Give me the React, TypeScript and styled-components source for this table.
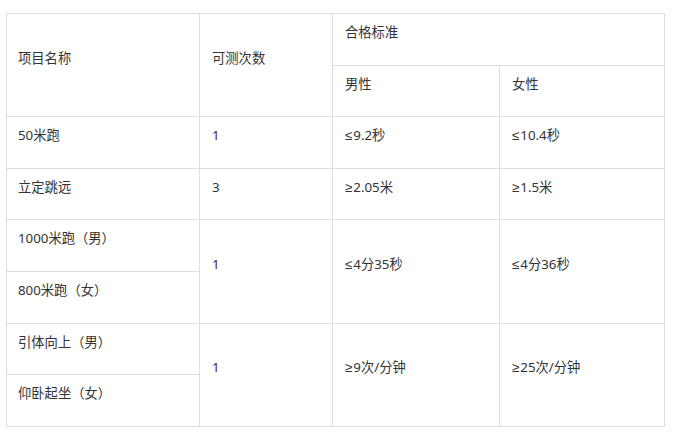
import React from 'react'
import styled, { createGlobalStyle } from 'styled-components'

const GlobalStyle = createGlobalStyle`
  html, body {
    margin: 0;
    background: #fff;
  }
  body {
    font-family: "Noto Sans", "Noto Sans CJK SC", sans-serif;
  }
`

const Page = styled.div`
  padding: 13px 0 0 6px;
`

const Table = styled.table`
  width: 658px;
  table-layout: fixed;
  border-collapse: collapse;
  font-size: 13.3px;
  color: #333;
`

const Cell = styled.td`
  border: 1px solid #dedede;
  padding: 8px 11px 22.6px 12px;
  line-height: 20px;
  vertical-align: middle;
  text-align: left;
  font-weight: 400;
  white-space: nowrap;
`

const FirstCell = styled(Cell)`
  padding-left: 11px;
`

// the CJK font draws ≤ / ≥ as slanted full-width glyphs; the reference uses the Latin form
const Sign = styled.span`
  font-family: "Liberation Sans", "DejaVu Sans", sans-serif;
  line-height: 1;
  margin-right: 1px;
`

type Standard = { male: string; female: string }

const rows: { names: string[]; times: string; std: Standard }[] = [
  { names: ['50米跑'], times: '1', std: { male: '≤9.2秒', female: '≤10.4秒' } },
  { names: ['立定跳远'], times: '3', std: { male: '≥2.05米', female: '≥1.5米' } },
  { names: ['1000米跑（男）', '800米跑（女）'], times: '1', std: { male: '≤4分35秒', female: '≤4分36秒' } },
  { names: ['引体向上（男）', '仰卧起坐（女）'], times: '1', std: { male: '≥9次/分钟', female: '≥25次/分钟' } },
]

function Value({ text }: { text: string }) {
  return (
    <>
      <Sign>{text[0]}</Sign>
      {text.slice(1)}
    </>
  )
}

export default function App() {
  return (
    <Page>
      <GlobalStyle />
      <Table>
        <colgroup>
          <col style={{ width: 193 }} />
          <col style={{ width: 133 }} />
          <col style={{ width: 167 }} />
          <col style={{ width: 165 }} />
        </colgroup>
        <tbody>
          <tr>
            <FirstCell rowSpan={2}>项目名称</FirstCell>
            <Cell rowSpan={2}>可测次数</Cell>
            <Cell colSpan={2}>合格标准</Cell>
          </tr>
          <tr>
            <Cell>男性</Cell>
            <Cell>女性</Cell>
          </tr>
          {rows.map((row) =>
            row.names.map((name, i) => (
              <tr key={name}>
                <FirstCell>{name}</FirstCell>
                {i === 0 && (
                  <>
                    <Cell rowSpan={row.names.length}>{row.times}</Cell>
                    <Cell rowSpan={row.names.length}>
                      <Value text={row.std.male} />
                    </Cell>
                    <Cell rowSpan={row.names.length}>
                      <Value text={row.std.female} />
                    </Cell>
                  </>
                )}
              </tr>
            ))
          )}
        </tbody>
      </Table>
    </Page>
  )
}
